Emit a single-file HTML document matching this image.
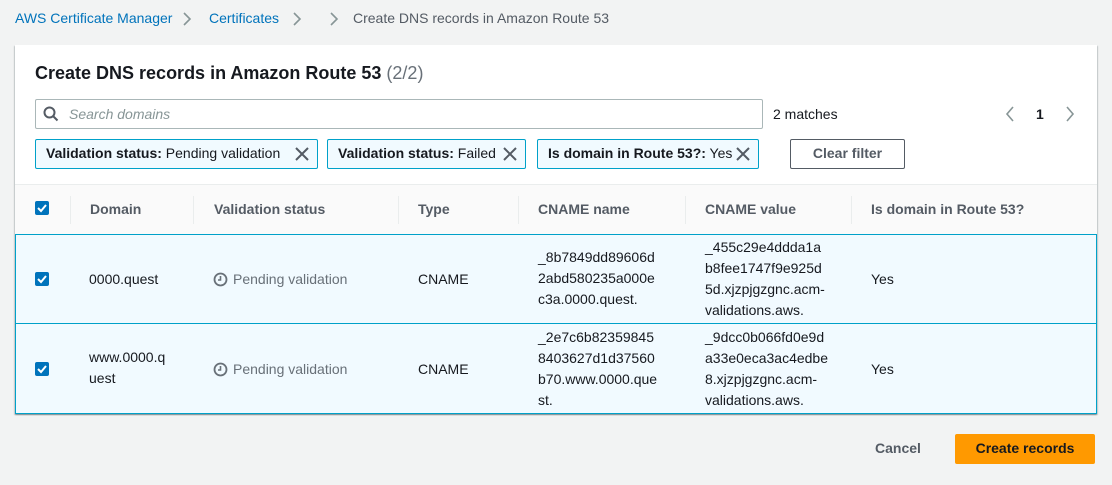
<!DOCTYPE html>
<html><head><style>
*{box-sizing:border-box;margin:0;padding:0}
body{width:1112px;height:485px;background:#f2f3f3;font-family:"Liberation Sans",sans-serif;font-size:14px;color:#16191f;position:relative;overflow:hidden}
.a{position:absolute}
.bc{top:10px;font-size:14px}
.lnk{color:#0073bb}
.card{left:15px;top:45px;width:1082px;height:369px;background:#fff;box-shadow:0 1px 1px rgba(0,28,36,.3),1px 1px 1px rgba(0,28,36,.15),-1px 1px 1px rgba(0,28,36,.15)}
.tok{top:139px;height:30px;border:1px solid #00a1c9;background:#f1faff;border-radius:2px;padding:0 0 0 10px;line-height:27px;font-size:14px}
.tok b{font-weight:bold}
.x{display:inline-block;margin-left:8px;margin-right:8px;vertical-align:middle}
.cb{width:14px;height:14px;background:#0073bb;border-radius:2px}
.hd{top:201px;font-weight:bold;color:#545b64}
.sep{top:196px;width:1px;height:28px;background:#eaeded}
.row{left:15px;width:1082px;background:#f1faff;border:1px solid #00a1c9}
.t{line-height:21px}
.gr{color:#687078}
</style></head><body>
<div class="a bc" style="left:15px"><span class="lnk">AWS Certificate Manager</span></div>
<svg class="a" style="left:182px;top:12px" width="10" height="14"><path d="M2 1l6 6-6 6" fill="none" stroke="#879596" stroke-width="1.6"/></svg>
<div class="a bc lnk" style="left:209px">Certificates</div>
<svg class="a" style="left:292px;top:12px" width="10" height="14"><path d="M2 1l6 6-6 6" fill="none" stroke="#879596" stroke-width="1.6"/></svg>
<svg class="a" style="left:329px;top:12px" width="10" height="14"><path d="M2 1l6 6-6 6" fill="none" stroke="#879596" stroke-width="1.6"/></svg>
<div class="a bc" style="left:353px;color:#545b64">Create DNS records in Amazon Route 53</div>
<div class="a card"></div>
<div class="a" style="left:35px;top:63px;font-size:18px;font-weight:bold">Create DNS records in Amazon Route 53 <span style="font-weight:normal;color:#687078">(2/2)</span></div>
<div class="a" style="left:35px;top:99px;width:728px;height:30px;border:1px solid #aab7b8;border-radius:2px;background:#fff"></div>
<svg class="a" style="left:43px;top:106px" width="16" height="16"><circle cx="6.5" cy="6.5" r="5" fill="none" stroke="#545b64" stroke-width="2"/><path d="M10 10l4.5 4.5" stroke="#545b64" stroke-width="2"/></svg>
<div class="a" style="left:69px;top:106px;font-style:italic;color:#879596">Search domains</div>
<div class="a" style="left:773px;top:106px">2 matches</div>
<svg class="a" style="left:1005px;top:106px" width="10" height="16"><path d="M8 1L2 8l6 7" fill="none" stroke="#879596" stroke-width="1.6"/></svg>
<div class="a" style="left:1036px;top:106px;font-weight:bold">1</div>
<svg class="a" style="left:1065px;top:106px" width="10" height="16"><path d="M2 1l6 7-6 7" fill="none" stroke="#879596" stroke-width="1.6"/></svg>
<div class="a tok" style="left:35px;width:283px"><b>Validation status:</b> Pending validation<svg class="x" style="position:absolute;right:0;top:7px" width="14" height="14"><path d="M1 1l12 12M13 1L1 13" stroke="#545b64" stroke-width="2"/></svg></div>
<div class="a tok" style="left:327px;width:199px"><b>Validation status:</b> Failed<svg class="x" style="position:absolute;right:0;top:7px" width="14" height="14"><path d="M1 1l12 12M13 1L1 13" stroke="#545b64" stroke-width="2"/></svg></div>
<div class="a tok" style="left:537px;width:222px"><b>Is domain in Route 53?:</b> Yes<svg class="x" style="position:absolute;right:0;top:7px" width="14" height="14"><path d="M1 1l12 12M13 1L1 13" stroke="#545b64" stroke-width="2"/></svg></div>
<div class="a" style="left:790px;top:139px;width:115px;height:30px;border:1px solid #545b64;border-radius:2px;text-align:center;line-height:27px;font-weight:bold;color:#545b64">Clear filter</div>
<div class="a" style="left:15px;top:184px;width:1082px;height:1px;background:#eaeded"></div>
<div class="a" style="left:15px;top:185px;width:1082px;height:49px;background:#fafafa"></div>
<div class="a cb" style="left:35px;top:201px"><svg width="14" height="14"><path d="M3 7l3 3 5-6" fill="none" stroke="#fff" stroke-width="2"/></svg></div>
<div class="a sep" style="left:70px"></div><div class="a sep" style="left:193px"></div><div class="a sep" style="left:398px"></div><div class="a sep" style="left:518px"></div><div class="a sep" style="left:685px"></div><div class="a sep" style="left:851px"></div>
<div class="a hd" style="left:90px">Domain</div>
<div class="a hd" style="left:214px">Validation status</div>
<div class="a hd" style="left:418px">Type</div>
<div class="a hd" style="left:538px">CNAME name</div>
<div class="a hd" style="left:705px">CNAME value</div>
<div class="a hd" style="left:871px">Is domain in Route 53?</div>
<div class="a row" style="top:234px;height:90px"></div>
<div class="a row" style="top:323px;height:91px"></div>
<div class="a cb" style="left:35px;top:272px"><svg width="14" height="14"><path d="M3 7l3 3 5-6" fill="none" stroke="#fff" stroke-width="2"/></svg></div>
<div class="a" style="left:89px;top:271px">0000.quest</div>
<svg class="a" style="left:213px;top:272px" width="15" height="15"><circle cx="7.5" cy="7.5" r="6" fill="none" stroke="#687078" stroke-width="1.8"/><path d="M7.5 4v4H5" fill="none" stroke="#687078" stroke-width="1.6"/></svg>
<div class="a gr" style="left:233px;top:271px">Pending validation</div>
<div class="a" style="left:418px;top:271px">CNAME</div>
<div class="a t" style="left:538px;top:247px">_8b7849dd89606d<br>2abd580235a000e<br>c3a.0000.quest.</div>
<div class="a t" style="left:705px;top:237px">_455c29e4ddda1a<br>b8fee1747f9e925d<br>5d.xjzpjgzgnc.acm-<br>validations.aws.</div>
<div class="a" style="left:871px;top:271px">Yes</div>
<div class="a cb" style="left:35px;top:362px"><svg width="14" height="14"><path d="M3 7l3 3 5-6" fill="none" stroke="#fff" stroke-width="2"/></svg></div>
<div class="a t" style="left:89px;top:347px">www.0000.q<br>uest</div>
<svg class="a" style="left:213px;top:362px" width="15" height="15"><circle cx="7.5" cy="7.5" r="6" fill="none" stroke="#687078" stroke-width="1.8"/><path d="M7.5 4v4H5" fill="none" stroke="#687078" stroke-width="1.6"/></svg>
<div class="a gr" style="left:233px;top:361px">Pending validation</div>
<div class="a" style="left:418px;top:361px">CNAME</div>
<div class="a t" style="left:538px;top:327px">_2e7c6b82359845<br>8403627d1d37560<br>b70.www.0000.que<br>st.</div>
<div class="a t" style="left:705px;top:327px">_9dcc0b066fd0e9d<br>a33e0eca3ac4edbe<br>8.xjzpjgzgnc.acm-<br>validations.aws.</div>
<div class="a" style="left:871px;top:361px">Yes</div>
<div class="a" style="left:875px;top:440px;font-weight:bold;color:#545b64">Cancel</div>
<div class="a" style="left:955px;top:434px;width:140px;height:30px;background:#ff9900;border-radius:2px;text-align:center;line-height:29px;font-weight:bold;color:#16191f">Create records</div>
</body></html>
